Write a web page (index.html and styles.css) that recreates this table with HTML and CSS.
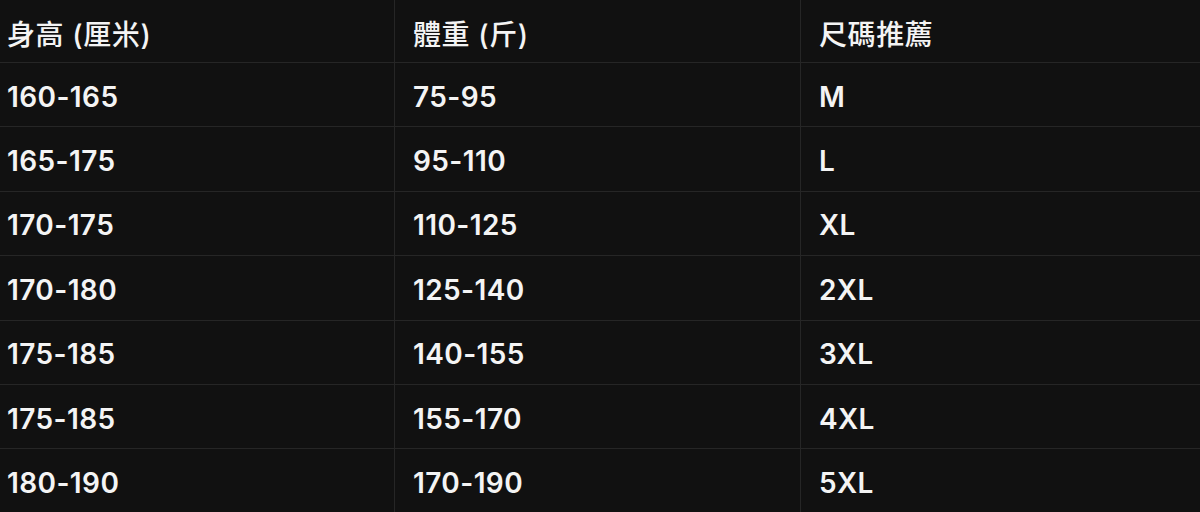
FILE: index.html
```html
<!DOCTYPE html>
<html lang="zh-Hant">
<head>
<meta charset="utf-8">
<link rel="stylesheet" href="styles.css">
</head>
<body>
<div class="table">
  <div class="row head">
    <div class="cell">身高 (厘米)</div>
    <div class="cell">體重 (斤)</div>
    <div class="cell">尺碼推薦</div>
  </div>
  <div class="row"><div class="cell">160-165</div><div class="cell">75-95</div><div class="cell">M</div></div>
  <div class="row"><div class="cell">165-175</div><div class="cell">95-110</div><div class="cell">L</div></div>
  <div class="row"><div class="cell">170-175</div><div class="cell">110-125</div><div class="cell">XL</div></div>
  <div class="row"><div class="cell">170-180</div><div class="cell">125-140</div><div class="cell">2XL</div></div>
  <div class="row"><div class="cell">175-185</div><div class="cell">140-155</div><div class="cell">3XL</div></div>
  <div class="row"><div class="cell">175-185</div><div class="cell">155-170</div><div class="cell">4XL</div></div>
  <div class="row"><div class="cell">180-190</div><div class="cell">170-190</div><div class="cell">5XL</div></div>
</div>
</body>
</html>
```
FILE: styles.css
```css
html, body {
  margin: 0;
  padding: 0;
  background: #111111;
  overflow: hidden;
}
body {
  width: 1200px;
  height: 512px;
  font-family: Inter, "Noto Sans CJK TC", sans-serif;
  color: #f4f4f4;
}
.table {
  margin-left: -11px;
  width: 1218px;
  display: flex;
  flex-direction: column;
}
.row {
  display: grid;
  grid-template-columns: 406px 406px 406px;
  height: 64.4px;
  box-sizing: border-box;
  border-bottom: 1px solid #262626;
}
.row.head {
  height: 63px;
}
.cell {
  display: flex;
  align-items: center;
  padding: 4px 18px 0;
  font-size: 28px;
  font-weight: 600;
  letter-spacing: 0.4px;
  border-right: 1px solid #262626;
  white-space: nowrap;
}
.head .cell {
  font-weight: 500;
  letter-spacing: 0.6px;
}
.cell:last-child {
  border-right: none;
}
```
